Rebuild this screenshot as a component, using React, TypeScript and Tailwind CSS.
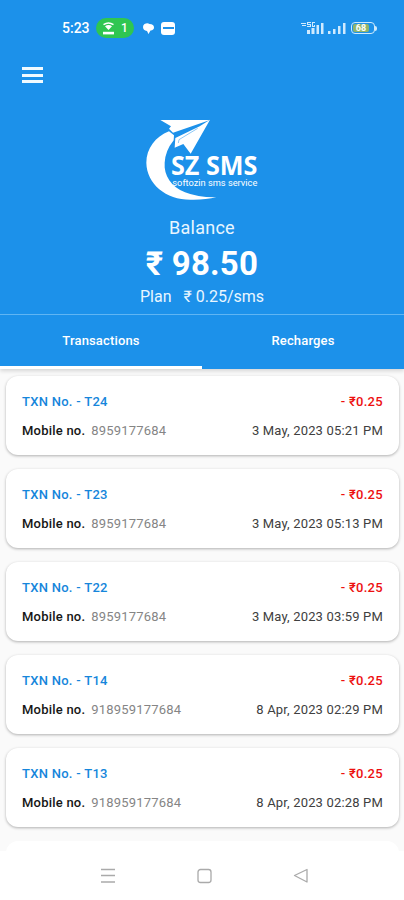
import { useState } from "react";

interface Transaction {
  id: string;
  mobile: string;
  amount: string;
  date: string;
}

const TRANSACTIONS: Transaction[] = [
  { id: "T24", mobile: "8959177684",   amount: "0.25", date: "3 May, 2023 05:21 PM" },
  { id: "T23", mobile: "8959177684",   amount: "0.25", date: "3 May, 2023 05:13 PM" },
  { id: "T22", mobile: "8959177684",   amount: "0.25", date: "3 May, 2023 03:59 PM" },
  { id: "T14", mobile: "918959177684", amount: "0.25", date: "8 Apr, 2023 02:29 PM" },
  { id: "T13", mobile: "918959177684", amount: "0.25", date: "8 Apr, 2023 02:28 PM" },
];

const TABS = ["Transactions", "Recharges"];

function StatusBar() {
  return (
    <div className="flex h-14 items-center justify-between pl-[62px] pr-[27px] text-white">
      <div className="flex items-center">
        <span className="w-[28px] whitespace-nowrap text-[14px] font-medium leading-5">5:23</span>
        <span className="ml-[6px] flex h-[20px] w-[38px] items-center justify-center gap-[6px] rounded-full bg-[#2fc651]">
          <svg width="13" height="13" viewBox="0 0 13 13" fill="none" stroke="white" strokeWidth="1.4">
            <path d="M1.5 2.6Q6.5 -.7 11.5 2.600" />
            <path d="M3 4.200Q6.500 2 10 4.200L6.500 8z" fill="white" stroke="none" />
            <path d="M1 9.800h11v2.600H1z" fill="white" stroke="none" />
          </svg>
          <span className="text-[12px] font-medium leading-none">1</span>
        </span>
        <svg className="ml-[8px]" width="13" height="13" viewBox="0 0 13 13" fill="white">
          <path d="M2.500 2q3-1.500 5 0 4.500 0 4.500 3.500 0 2.500-3.500 3L6.500 12 5 9Q1 8.500 1 5q0-2 1.500-3z" />
        </svg>
        <span className="ml-[6px] flex h-[13px] w-[14px] items-center justify-center rounded-[3px] bg-white">
          <span className="h-[2px] w-[11px] bg-[#1c91ea]" />
        </span>
      </div>

      <div className="flex items-center">
        <svg width="23" height="14" viewBox="0 0 23 14" fill="#cfeafe">
          <path d="M6 9h3v4H6zM10.500 7h3v6h-3zM15.500 4h2.500v9h-2.500zM20 2h2.500v11H20z" />
          <path d="M0 2h5v1H0zM1 4h4v1H1zM6 1h4v1H7v1h3v3H6V5h3V4H6zM11 1h3v1h-2v3h1V4h1v2h-3z" />
        </svg>
        <svg className="ml-[4px]" width="18" height="14" viewBox="0 0 18 14" fill="#cfeafe">
          <path d="M0 10h2.500v3H0zM5 8h2.500v5H5zM10 5h2.500v8H10zM15 2h2.500v11H15z" />
        </svg>
        <span className="ml-[5px] flex h-[12px] w-[24px] items-center rounded-[4px] border border-[#cdeafc] p-px">
          <span className="flex h-full w-[16px] items-center justify-center rounded-[2px] bg-[#8fb56c] text-[9px] font-bold leading-none">68</span>
        </span>
        <span className="h-[5px] w-[2px] rounded-r bg-[#cdeafc]" />
      </div>
    </div>
  );
}

function Logo() {
  return (
    <svg width="140" height="100" viewBox="0 0 420 300" fill="white">
      {/* Swoosh */}
      <path d="M117 64C76 80 49 116 49 158C50 222 108 269 181 269Q225 270 259 262Q205 263 165 247C124 230 101 196 104 158Q106 122 131 91L132 76Z" />
      {/* Paper plane */}
      <path d="M91 30H240L129 68L117 56L123 49Z" />
      <path d="M240 29L182 131L160 102L134 113L136 84L209 49L240 29Z" />
      <path d="M203 55L147 89L145 99" fill="none" stroke="#1c91ea" strokeWidth="1.500" />
      <text x="123" y="195" fontFamily="Open Sans" fontSize="80" fontWeight="700" textLength="259" lengthAdjust="spacingAndGlyphs">SZ SMS</text>
      <text x="127" y="227" fontFamily="Roboto" fontSize="27" textLength="255" lengthAdjust="spacingAndGlyphs">softozin sms service</text>
    </svg>
  );
}

function TransactionCard({ item }: { item: Transaction }) {
  return (
    <div className="flex h-[79px] shrink-0 flex-col rounded-xl bg-white px-4 pt-[16px] text-[13px] leading-5 shadow-[0_1px_3px_rgba(0,0,0,0.3)]">
      <div className="flex justify-between font-medium">
        <span className="tracking-[0.28px] text-[#1686db]">TXN No. - {item.id}</span>
        <span className="tracking-[0.3px] text-[#ed1010]">- ₹{item.amount}</span>
      </div>
      <div className="mt-[9px] flex justify-between">
        <span>
          <span className="font-medium tracking-[0.22px] text-[#161616]">Mobile no.</span>
          <span className="ml-[6px] tracking-[0.2px] text-[#858585]">{item.mobile}</span>
        </span>
        <span className="tracking-[0.17px] text-[#404040]">{item.date}</span>
      </div>
    </div>
  );
}

export default function App() {
  const [tab, setTab] = useState("Transactions");

  return (
    <div className="flex h-[900px] w-[404px] flex-col overflow-hidden bg-[#fafafa] font-['Roboto',sans-serif]">
      <header className="flex h-[369px] shrink-0 flex-col bg-[#1c91ea] text-white shadow-[0_2px_4px_rgba(0,0,0,0.15)]">
        <StatusBar />

        <button className="ml-[22px] mt-[11px] flex h-[16px] w-[21px] shrink-0 flex-col justify-between" aria-label="Menu">
          <span className="h-[3px] w-full bg-[#f0faff]" />
          <span className="h-[3px] w-full bg-[#f0faff]" />
          <span className="h-[3px] w-full bg-[#f0faff]" />
        </button>

        <div className="mt-[27px] flex h-[204px] shrink-0 flex-col items-center">
          <div className="-ml-1">
            <Logo />
          </div>
          <p className="mt-[6px] text-[18px] leading-6 tracking-[0.25px] text-[#e9f6ff]">Balance</p>
          <p className="mt-[4px] text-[33px] font-bold leading-10 tracking-[0.2px]">₹ 98.50</p>
          <p className="mt-px flex gap-[12px] text-[16px] leading-6 text-[#e9f6ff]">
            <span>Plan</span>
            <span>₹ 0.25/sms</span>
          </p>
        </div>

        <nav className="flex h-[55px] shrink-0 border-t border-[#60b5f3]">
          {TABS.map((name) => (
            <button
              key={name}
              onClick={() => setTab(name)}
              className={`flex-1 border-b-[3px] pt-px text-[13px] font-medium tracking-[0.15px] ${tab === name ? "border-white" : "border-transparent"}`}
            >
              {name}
            </button>
          ))}
        </nav>
      </header>

      <main className="flex min-h-0 flex-1 flex-col gap-[14px] overflow-hidden pl-[6px] pr-[5px] pt-[7px]">
        {TRANSACTIONS.map((item) => (
          <TransactionCard key={item.id} item={item} />
        ))}
        <div className="h-[79px] shrink-0 rounded-xl bg-white" />
      </main>

      {/* System navigation */}
      <footer className="flex h-[49px] shrink-0 items-center bg-white pl-[100px]">
        <svg width="210" height="16" viewBox="0 0 210 16" fill="none" stroke="#aaa" strokeWidth="1.300">
          <path d="M1 1.500h14M1 7.500h14M1 14h14" />
          <rect x="98" y="1.500" width="13" height="13" rx="2.500" />
          <path d="M194.500 7.500L207 1.500V14Z" strokeLinejoin="round" />
        </svg>
      </footer>
    </div>
  );
}
